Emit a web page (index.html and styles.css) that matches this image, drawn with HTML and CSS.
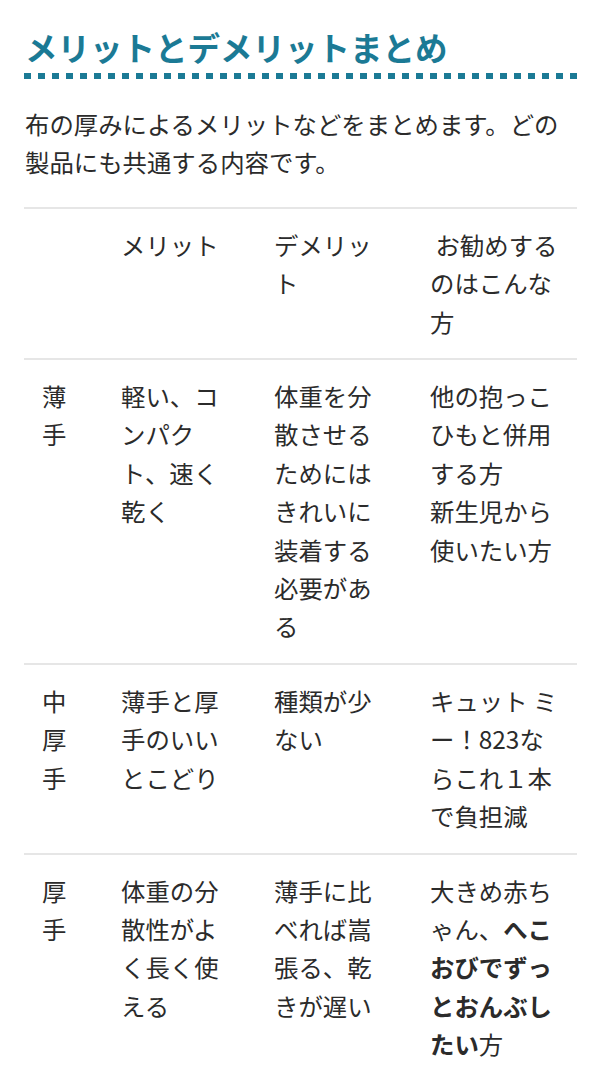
FILE: index.html
```html
<!DOCTYPE html>
<html lang="ja">
<head>
<meta charset="utf-8">
<title>メリットとデメリットまとめ</title>
<link rel="stylesheet" href="styles.css">
</head>
<body>
<main class="wrap">
  <h2 class="title">メリットとデメリットまとめ</h2>
  <p class="lead">布の厚みによるメリットなどをまとめます。どの製品にも共通する内容です。</p>
  <table class="summary">
    <colgroup>
      <col class="c1"><col class="c2"><col class="c3"><col class="c4">
    </colgroup>
    <thead>
      <tr>
        <th></th>
        <th>メリット</th>
        <th>デメリット</th>
        <th>&nbsp;お勧めするのはこんな方</th>
      </tr>
    </thead>
    <tbody>
      <tr>
        <td>薄手</td>
        <td>軽い、コンパクト、速く乾く</td>
        <td>体重を分散させるためにはきれいに装着する必要がある</td>
        <td>他の抱っこひもと併用する方<br>新生児から使いたい方</td>
      </tr>
      <tr>
        <td>中厚手</td>
        <td>薄手と厚手のいいとこどり</td>
        <td>種類が少ない</td>
        <td>キュット ミー！823ならこれ１本で負担減</td>
      </tr>
      <tr>
        <td>厚手</td>
        <td>体重の分散性がよく長く使える</td>
        <td>薄手に比べれば嵩張る、乾きが遅い</td>
        <td>大きめ赤ちゃん、<strong>へこおびでずっとおんぶしたい</strong>方</td>
      </tr>
    </tbody>
  </table>
</main>
</body>
</html>
```
FILE: styles.css
```css
html, body {
  margin: 0;
  padding: 0;
  background: #ffffff;
}

body {
  font-family: "Noto Sans CJK JP", "Noto Sans", sans-serif;
  color: #2b2b2b;
  font-size: 24.4px;
  line-height: 38.4px;
}

.wrap {
  padding: 25px 26px 0 24px;
}

.title {
  margin: 0;
  font-size: 32.5px;
  line-height: 44px;
  font-weight: 700;
  color: #1b7a95;
  padding: 0 0 10px 1px;
  background-image: repeating-linear-gradient(90deg, #1b7a95 0 7px, transparent 7px 14px);
  background-repeat: no-repeat;
  background-size: 100% 6px;
  background-position: left bottom;
}

.lead {
  margin: 26px 0 0;
  padding-left: 1px;
}

.summary {
  margin-top: 25px;
  width: 553px;
  border-collapse: collapse;
  table-layout: fixed;
}

.c1 { width: 79px; }
.c2 { width: 153px; }
.c3 { width: 156px; }
.c4 { width: 165px; }

.summary th,
.summary td {
  border-top: 2px solid #e6e6e6;
  padding: 17px 18px;
  text-align: left;
  vertical-align: top;
  font-weight: 400;
}

.summary strong {
  font-weight: 700;
}
```
